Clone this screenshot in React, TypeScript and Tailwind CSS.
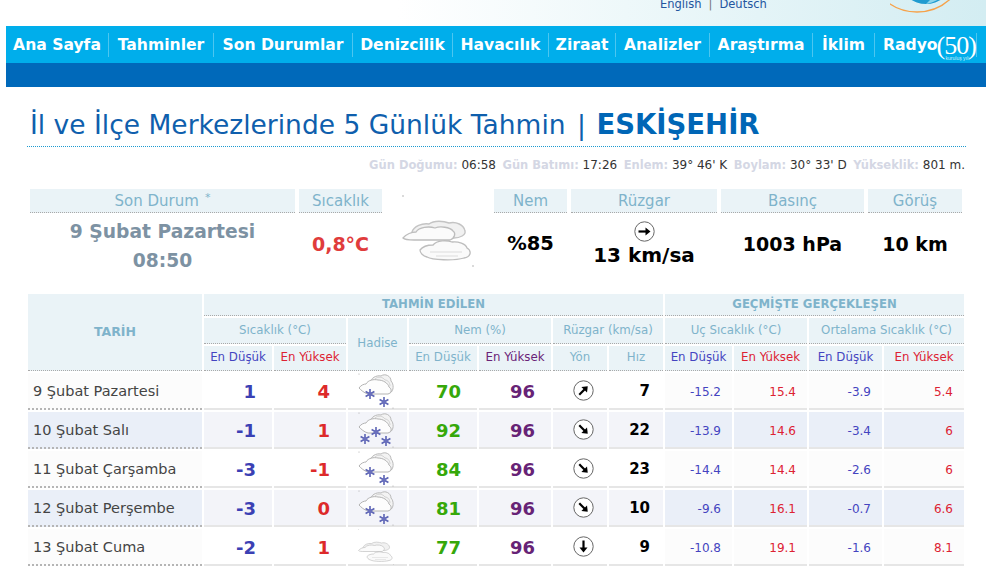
const NAV = [
  { label: "Ana Sayfa", width: "w-[103px]" },
  { label: "Tahminler", width: "w-[105px]" },
  { label: "Son Durumlar", width: "w-[139px]" },
  { label: "Denizcilik", width: "w-[100px]" },
  { label: "Havacılık", width: "w-[96px]" },
  { label: "Ziraat", width: "w-[67px]" },
  { label: "Analizler", width: "w-[94px]" },
  { label: "Araştırma", width: "w-[103px]" },
  { label: "İklim", width: "w-[62px]" },
];

const ROWS = [
  { date: "9 Şubat Pazartesi", low: "1", high: "4", flakes: 2, hum1: "70", hum2: "96", dir: -45, speed: "7", p: ["-15.2", "15.4", "-3.9", "5.4"] },
  { date: "10 Şubat Salı", low: "-1", high: "1", flakes: 3, hum1: "92", hum2: "96", dir: 45, speed: "22", p: ["-13.9", "14.6", "-3.4", "6"] },
  { date: "11 Şubat Çarşamba", low: "-3", high: "-1", flakes: 2, hum1: "84", hum2: "96", dir: 45, speed: "23", p: ["-14.4", "14.4", "-2.6", "6"] },
  { date: "12 Şubat Perşembe", low: "-3", high: "0", flakes: 2, hum1: "81", hum2: "96", dir: 45, speed: "10", p: ["-9.6", "16.1", "-0.7", "6.6"] },
  { date: "13 Şubat Cuma", low: "-2", high: "1", flakes: 0, hum1: "77", hum2: "96", dir: 90, speed: "9", p: ["-10.8", "19.1", "-1.6", "8.1"] },
];

function ArrowDial({ angle }: { angle: number }) {
  return (
    <svg width="21" height="21" viewBox="0 0 21 21">
      <circle cx="10.5" cy="10.5" r="9.7" fill="#fff" stroke="#666" strokeWidth="1" />
      <g transform={`rotate(${angle} 10.5 10.5)`}>
        <path d="M4.5 10.5H14" stroke="#000" strokeWidth="2.2" />
        <path d="M11.5 6.5L16.5 10.5L11.5 14.5Z" fill="#000" />
      </g>
    </svg>
  );
}

function OvercastIcon({ size }: { size: number }) {
  return (
    <svg width={size} height={size} viewBox="0 0 72 72">
      <path d="M10 37C12 31 20 28 27 29C32 25 42 26 47 28C54 26 62 30 63 36C64 40 58 43 52 43H20C14 43 10 41 10 37Z" fill="#f1f1f1" stroke="#c4c4c4" strokeWidth="1.4" />
      <path d="M1 43C4 39 10 37 14 37C17 32 27 31 33 33C38 31 48 32 51 36C54 38 53 43 48 45H12C7 45 3 45 1 43Z" fill="#fbfbfb" stroke="#bdbdbd" strokeWidth="1.3" />
      <path d="M18 55C21 51 27 50 31 50C35 45 45 45 50 47C56 46 64 49 65 53C70 56 69 62 62 63C52 66 30 65 25 62C21 61 18 58 18 55Z" fill="#fafafa" stroke="#bdbdbd" strokeWidth="1.3" />
      <path d="M28 57H60M34 61H56" stroke="#dcdcdc" strokeWidth="1.2" />
      <circle cx="1" cy="1" r="0.7" fill="#999" />
      <circle cx="71" cy="71" r="0.7" fill="#999" />
    </svg>
  );
}

function Flake({ x, y }: { x: number; y: number }) {
  return (
    <g transform={`translate(${x} ${y})`} stroke="#5c64b4" strokeWidth="1.6">
      <path d="M0 -5V5M-4.4 -2.5L4.4 2.5M-4.4 2.5L4.4 -2.5" />
      <circle r="2.2" fill="#6a70bd" stroke="none" />
    </g>
  );
}

function SnowIcon({ flakes }: { flakes: number }) {
  return (
    <svg width="36" height="36" viewBox="0 0 36 36">
      <path d="M12 10C13 5 18 2 23 3C27 0 33 3 33 8C36 11 36 18 32 20H18Z" fill="#f3f3f3" stroke="#b9b9b9" strokeWidth="1" />
      <path d="M17 6C20 3 25 4 27 7C30 7 32 10 32 13" fill="none" stroke="#cfcfcf" strokeWidth="0.9" />
      <path d="M1 15C3 12 6 11 8 11C10 7 16 6 20 7C25 7 30 10 31 14C34 16 34 20 30 21H10C6 20 3 17 1 15Z" fill="#fdfdfd" stroke="#b4b4b4" strokeWidth="1" />
      {flakes === 2 ? (
        <>
          <Flake x={12} y={21} />
          <Flake x={26} y={29} />
        </>
      ) : (
        <>
          <Flake x={7} y={27} />
          <Flake x={18} y={20} />
          <Flake x={28} y={29} />
        </>
      )}
      <circle cx="1" cy="1" r="0.5" fill="#999" />
      <circle cx="35" cy="35" r="0.5" fill="#999" />
    </svg>
  );
}

export default function App() {
  const headCell = "flex items-center justify-center bg-[#eaf3f7] border-b border-dotted border-[#a9a9a9] text-[#7fb3cb]";
  const leftCell = "flex items-center bg-[#fcfcfc] border-b-2 border-[#e6e6e6]";
  const metaLabel = "text-[11.5px] text-[#d4d7e4]";

  return (
    <div className="h-[583px] w-full overflow-hidden bg-white pl-[6px] font-['DejaVu_Sans',sans-serif]">
      {/* Header strip */}
      <div className="flex h-[26px] w-[980px] overflow-hidden bg-gradient-to-r from-white from-40% to-[#d3edf2]">
        <div className="-mt-[3px] ml-[654px] flex h-[16px] items-center gap-[7px] text-[11.5px] text-[#23559f]">
          <span>English</span>
          <span className="text-[#777]">|</span>
          <span>Deutsch</span>
        </div>
        <svg className="ml-auto mr-[6px] shrink-0" width="90" height="26" viewBox="0 0 90 26">
          <circle cx="27" cy="-37" r="49" fill="none" stroke="#f6a24a" strokeWidth="1.4" />
          <ellipse cx="36" cy="-16" rx="24" ry="20" fill="#1f9bd0" />
          <path d="M36 4C42 3 48 0 52 -3L42 -2Z" fill="#8ad4ea" />
        </svg>
      </div>

      {/* Nav */}
      <div className="flex h-[37px] w-[980px] items-center bg-[#00aeeb]">
        {NAV.map((item) => (
          <div key={item.label} className={`flex h-[24px] items-center justify-center whitespace-nowrap border-r border-[#4cc6f0] pt-[2px] text-[15.6px] font-bold text-white ${item.width}`}>
            {item.label}
          </div>
        ))}
        <div className="flex h-[24px] w-[102px] items-center whitespace-nowrap border-r border-[#4cc6f0] pl-[8px] pt-[2px] text-[15.6px] font-bold text-white">
          Radyo
          <span className="relative -ml-[1px] font-['Liberation_Serif',serif] text-[26px] font-normal leading-[20px] tracking-[-1px]">
            (50)
            <span className="absolute left-[9px] top-[20px] font-['Liberation_Sans',sans-serif] text-[5px] leading-[5px] tracking-normal text-[#cdeefa]">kuruluş yılı</span>
          </span>
        </div>
      </div>
      <div className="h-[24px] w-[980px] bg-[#0069ba]" />

      {/* Title */}
      <div className="ml-[21px] mt-[16px] h-[44px] w-[939px] border-b border-dotted border-[#1d9ad0] pl-[3px] text-[26.5px] leading-[42px] text-[#0f5fad]">
        İl ve İlçe Merkezlerinde 5 Günlük Tahmin <span className="ml-[3px]">|</span> <span className="ml-[2px] text-[27.5px] font-bold text-[#0066b6]">ESKİŞEHİR</span>
      </div>

      {/* Astronomy line */}
      <div className="ml-[21px] flex h-[35px] w-[938px] items-center justify-end gap-[6.5px] pt-[1px] text-[12px] text-[#333]">
        <span><b className={metaLabel}>Gün Doğumu:</b> 06:58</span>
        <span><b className={metaLabel}>Gün Batımı:</b> 17:26</span>
        <span><b className={metaLabel}>Enlem:</b> 39° 46' K</span>
        <span><b className={metaLabel}>Boylam:</b> 30° 33' D</span>
        <span><b className={metaLabel}>Yükseklik:</b> 801 m.</span>
      </div>

      {/* Current conditions */}
      <div className="ml-[24px] mt-[7px] grid grid-cols-[265px_83px_104px_73px_146px_143px_94px] grid-rows-[24px_62px] gap-x-[4px]">
        <div className={`${headCell} pt-[1px] text-[15px]`}>
          Son Durum <span className="-mt-[6px] ml-[6px] text-[11px]">*</span>
        </div>
        <div className={`${headCell} pt-[1px] text-[15px]`}>Sıcaklık</div>
        <div className="row-span-2 flex justify-center pt-[6px]">
          <OvercastIcon size={72} />
        </div>
        <div className={`${headCell} pt-[1px] text-[15px]`}>Nem</div>
        <div className={`${headCell} pt-[1px] text-[15px]`}>Rüzgar</div>
        <div className={`${headCell} pt-[1px] text-[15px]`}>Basınç</div>
        <div className={`${headCell} pt-[1px] text-[15px]`}>Görüş</div>

        <div className="pt-[4px] text-center text-[18.7px] font-bold leading-[29px] text-[#7d92a3]">
          9 Şubat Pazartesi
          <br />
          08:50
        </div>
        <div className="flex items-center justify-center text-[19px] font-bold text-[#e03c3c]">0,8°C</div>
        <div className="flex items-center justify-center text-[19.5px] font-bold text-black">%85</div>
        <div className="flex flex-col items-center pt-[8px] text-[20px] font-bold leading-[26px] text-black">
          <ArrowDial angle={0} />
          13 km/sa
        </div>
        <div className="flex items-center justify-center text-[19px] font-bold text-black">1003 hPa</div>
        <div className="flex items-center justify-center text-[19px] font-bold text-black">10 km</div>
      </div>

      {/* Forecast table */}
      <div className="ml-[22px] mt-[19px] grid grid-cols-[174px_68px_72px_59px_68px_72px_54px_54px_67px_73px_73px_80px] grid-rows-[22px_26px_25px_repeat(5,37px)] gap-[2px]">
        <div className={`${headCell} row-span-3 text-[12.5px] font-bold`}>TARİH</div>
        <div className={`${headCell} col-span-7 text-[11.7px] font-bold`}>TAHMİN EDİLEN</div>
        <div className={`${headCell} col-span-4 text-[11.7px] font-bold`}>GEÇMİŞTE GERÇEKLEŞEN</div>

        <div className={`${headCell} col-span-2 text-[11.8px]`}>Sıcaklık (°C)</div>
        <div className={`${headCell} row-span-2 text-[11.8px]`}>Hadise</div>
        <div className={`${headCell} col-span-2 text-[11.8px]`}>Nem (%)</div>
        <div className={`${headCell} col-span-2 text-[11.8px]`}>Rüzgar (km/sa)</div>
        <div className={`${headCell} col-span-2 text-[11.8px]`}>Uç Sıcaklık (°C)</div>
        <div className={`${headCell} col-span-2 text-[11.8px]`}>Ortalama Sıcaklık (°C)</div>

        <div className={`${headCell} text-[11.8px] !text-[#4444c0]`}>En Düşük</div>
        <div className={`${headCell} text-[11.8px] !text-[#dd2233]`}>En Yüksek</div>
        <div className={`${headCell} text-[11.8px]`}>En Düşük</div>
        <div className={`${headCell} text-[11.8px] !text-[#6a2377]`}>En Yüksek</div>
        <div className={`${headCell} text-[11.8px]`}>Yön</div>
        <div className={`${headCell} text-[11.8px]`}>Hız</div>
        <div className={`${headCell} text-[11.8px] !text-[#4444c0]`}>En Düşük</div>
        <div className={`${headCell} text-[11.8px] !text-[#dd2233]`}>En Yüksek</div>
        <div className={`${headCell} text-[11.8px] !text-[#4444c0]`}>En Düşük</div>
        <div className={`${headCell} text-[11.8px] !text-[#dd2233]`}>En Yüksek</div>

        {ROWS.map((row, i) => {
          const even = i % 2 === 1;
          const fore = `flex items-center justify-end border-b-2 border-[#e6e6e6] ${even ? "bg-[#f3f4f9]" : "bg-white"}`;
          const past = `flex items-center justify-end border-b-2 border-[#e6e6e6] pr-[11px] pt-[2px] text-[12px] ${even ? "bg-[#eaeff8]" : "bg-[#fcfcfc]"}`;
          return (
            <div key={row.date} className="contents">
              <div className={`${leftCell} border-b border-dotted !border-[#b5b5b5] pl-[5px] pt-[2px] text-[14.5px] text-[#444] ${even ? "!bg-[#eaeff8]" : ""}`}>{row.date}</div>
              <div className={`${fore} pr-[16px] pt-[2px] text-[18px] font-bold text-[#3b40b4]`}>{row.low}</div>
              <div className={`${fore} pr-[16px] pt-[2px] text-[18px] font-bold text-[#dd2a2a]`}>{row.high}</div>
              <div className={`${fore} !justify-start pl-[10px]`}>
                {row.flakes > 0 ? <SnowIcon flakes={row.flakes} /> : <OvercastIcon size={36} />}
              </div>
              <div className={`${fore} pr-[16px] pt-[2px] text-[18px] font-bold text-[#36a80a]`}>{row.hum1}</div>
              <div className={`${fore} pr-[16px] pt-[2px] text-[18px] font-bold text-[#672376]`}>{row.hum2}</div>
              <div className={`${fore} !justify-center pl-[6px]`}>
                <ArrowDial angle={row.dir} />
              </div>
              <div className={`${fore} pr-[13px] pt-[2px] text-[15px] font-bold text-black`}>{row.speed}</div>
              <div className={`${past} text-[#4444c0]`}>{row.p[0]}</div>
              <div className={`${past} text-[#dd2233]`}>{row.p[1]}</div>
              <div className={`${past} text-[#4444c0]`}>{row.p[2]}</div>
              <div className={`${past} text-[#dd2233]`}>{row.p[3]}</div>
            </div>
          );
        })}
      </div>
    </div>
  );
}
